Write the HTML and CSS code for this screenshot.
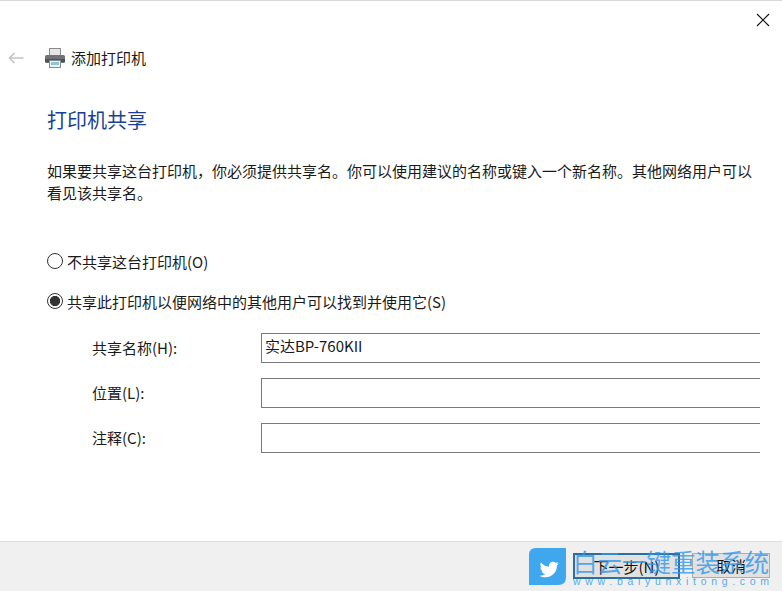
FILE: index.html
```html
<!DOCTYPE html>
<html lang="zh">
<head>
<meta charset="utf-8">
<title>添加打印机</title>
<link rel="stylesheet" href="styles.css">
</head>
<body>
<div class="window">
  <div class="close-row">
    <svg class="close" width="14" height="14" viewBox="0 0 14 14"><path d="M1 1L13 13M13 1L1 13" stroke="#111" stroke-width="1.1" fill="none"/></svg>
  </div>
  <div class="nav">
    <svg class="back" width="16" height="12" viewBox="0 0 16 12"><path d="M15.500 6H1.500M6.500 1L1.500 6L6.500 11" stroke="#c4c4c4" stroke-width="1.6" fill="none"/></svg>
    <svg class="printer" width="20" height="20" viewBox="0 0 20 20">
      <rect x="4.500" y="0.500" width="11" height="7" fill="#e6e6e6" stroke="#8b8b8b"/>
      <rect x="0" y="7" width="20" height="8" rx="1.500" fill="#6d7478"/>
      <rect x="0" y="11" width="20" height="3" fill="#4c5357"/>
      <rect x="4.500" y="12.500" width="11" height="7" fill="#eef3f5" stroke="#8b8b8b"/>
      <rect x="6" y="14" width="8" height="3" fill="#8cc4d8"/>
    </svg>
    <span class="nav-title">添加打印机</span>
  </div>
  <h1 class="heading">打印机共享</h1>
  <p class="desc">如果要共享这台打印机，你必须提供共享名。你可以使用建议的名称或键入一个新名称。其他网络用户可以看见该共享名。</p>
  <div class="radio-row first">
    <span class="radio"></span>
    <span>不共享这台打印机(O)</span>
  </div>
  <div class="radio-row second">
    <span class="radio checked"></span>
    <span>共享此打印机以便网络中的其他用户可以找到并使用它(S)</span>
  </div>
  <div class="fields">
    <label class="field-label">共享名称(H):</label>
    <div class="input">实达BP-760KII</div>
    <label class="field-label">位置(L):</label>
    <div class="input"></div>
    <label class="field-label">注释(C):</label>
    <div class="input"></div>
  </div>
  <div class="spacer"></div>
  <div class="footer">
    <button class="btn primary">下一步(N)</button>
    <button class="btn">取消</button>
  </div>
  <div class="watermark">
    <svg class="wm-logo" width="37" height="37" viewBox="0 0 38 38">
      <path d="M7 0H38V30Q38 38 30 38H0V7Q0 0 7 0Z" fill="#3fa7ee"/>
      <g transform="translate(6.500 7) scale(.78)">
        <path d="M31 11.500c-1 .5-2 .8-3 .9 1-.7 1.900-1.600 2.200-2.800-1 .6-2.100 1-3.300 1.300-1-1-2.300-1.700-3.800-1.700-2.900 0-5.200 2.300-5.200 5.200 0 .4 0 .8.1 1.200-4.300-.2-8.100-2.300-10.700-5.400-.4.8-.7 1.700-.7 2.600 0 1.800.9 3.400 2.300 4.300-.9 0-1.700-.3-2.400-.6 0 2.500 1.800 4.600 4.200 5.100-.4.100-.9.200-1.400.200-.3 0-.7 0-1-.1.700 2.100 2.600 3.600 4.900 3.600-1.800 1.400-4 2.200-6.500 2.200-.4 0-.8 0-1.200-.1 2.300 1.500 5.100 2.300 8 2.300 9.600 0 14.900-8 14.900-14.900v-.7c1-.7 1.900-1.700 2.600-2.700z" fill="#fff"/>
      </g>
    </svg>
    <div class="wm-text">
      <div class="wm-cn">白云一键重装系统</div>
      <div class="wm-en">www.baiyunxitong.com</div>
    </div>
  </div>
</div>
</body>
</html>
```
FILE: styles.css
```css
* { box-sizing: border-box; }
html, body { margin: 0; padding: 0; height: 100%; }
body {
  background: #fff;
  font-family: "Noto Sans CJK SC", "Liberation Sans", sans-serif;
  font-size: 15px;
  color: #1a1a1a;
  overflow: hidden;
}
.window {
  position: relative;
  width: 782px;
  height: 591px;
  display: flex;
  flex-direction: column;
  border-top: 1px solid #d9d9d9;
  overflow: hidden;
}
.close-row {
  display: flex;
  justify-content: flex-end;
  padding: 12px 12px 0 0;
  height: 34px;
}
.nav {
  display: flex;
  align-items: center;
  height: 46px;
  padding-left: 8px;
}
.back { margin-right: 21px; }
.printer { margin-right: 6px; }
.nav-title { font-size: 15px; padding-bottom: 2px; }
.heading {
  margin: 25px 0 0 47px;
  font-size: 20px;
  font-weight: 400;
  line-height: 28px;
  color: #1b3f94;
}
.desc {
  margin: 26px 0 0 47px;
  width: 716px;
  font-size: 15px;
  line-height: 22px;
}
.radio-row {
  display: flex;
  align-items: center;
  gap: 4px;
  margin-left: 47px;
  height: 20px;
  font-size: 15px;
}
.radio-row.first { margin-top: 47px; }
.radio-row.second { margin-top: 20px; }
.radio {
  width: 16px;
  height: 16px;
  border: 1px solid #333;
  border-radius: 50%;
  background: #fff;
  display: inline-block;
  flex: none;
}
.radio.checked {
  background: radial-gradient(circle, #333 0 4.800px, #fff 5.400px);
}
.fields {
  display: grid;
  grid-template-columns: 169px 499px;
  grid-auto-rows: 30px;
  row-gap: 15px;
  margin: 22px 0 0 92px;
  align-items: center;
}
.field-label { font-size: 15px; padding-bottom: 2px; }
.input {
  height: 30px;
  border: 1px solid #7a7a7a;
  border-right: 0;
  padding-left: 3px;
  font-size: 15px;
  line-height: 24px;
}
.spacer { flex: 1; }
.footer {
  height: 50px;
  flex: none;
  background: #f0f0f0;
  border-top: 1px solid #dfdfdf;
  display: flex;
  justify-content: flex-end;
  align-items: flex-start;
  gap: 12px;
  padding: 11px 12px 0 0;
}
.btn {
  width: 78px;
  height: 25px;
  padding: 0;
  border: 1px solid #adadad;
  background: #e1e1e1;
  font: inherit;
  font-size: 15px;
  line-height: 21px;
  color: #111;
}
.btn.primary {
  width: 107px;
  height: 26px;
  border: 2px solid #2a6f9f;
}
.watermark {
  position: absolute;
  left: 529px;
  top: 547px;
  display: flex;
  gap: 7px;
  pointer-events: none;
}
.wm-text { width: 200px; }
.wm-cn {
  font-size: 24.500px;
  line-height: 27px;
  color: rgba(45, 150, 235, 0.8);
  white-space: nowrap;
}
.wm-en {
  font-family: "Liberation Sans", sans-serif;
  font-size: 10.500px;
  line-height: 12px;
  letter-spacing: 4.700px;
  color: rgba(45, 150, 235, 0.8);
  white-space: nowrap;
}
```
